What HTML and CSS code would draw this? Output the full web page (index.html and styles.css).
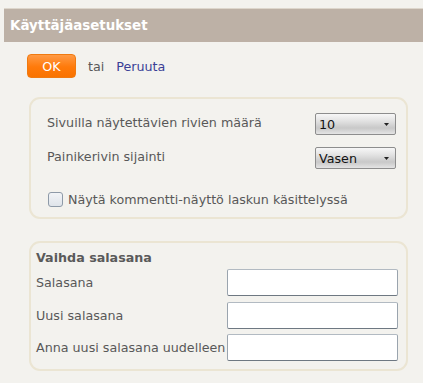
FILE: index.html
```html
<!DOCTYPE html>
<html lang="fi">
<head>
<meta charset="utf-8">
<link rel="stylesheet" href="styles.css">
</head>
<body>
<div class="page">
  <div class="header"><h1 class="title">Käyttäjäasetukset</h1></div>
  <div class="actions">
    <button class="ok-btn" type="button">OK</button>
    <span class="or">tai</span>
    <a class="cancel" href="#">Peruuta</a>
  </div>
  <div class="box box-prefs">
    <div class="row row-first">
      <span class="label">Sivuilla näytettävien rivien määrä</span>
      <div class="select"><span>10</span><svg class="arrow" width="5" height="3" viewBox="0 0 5 3"><path d="M0 0h5L2.5 3z" fill="#222"/></svg></div>
    </div>
    <div class="row row-second">
      <span class="label">Painikerivin sijainti</span>
      <div class="select"><span>Vasen</span><svg class="arrow" width="5" height="3" viewBox="0 0 5 3"><path d="M0 0h5L2.5 3z" fill="#222"/></svg></div>
    </div>
    <label class="check-row">
      <span class="checkbox"></span>
      <span class="label">Näytä kommentti-näyttö laskun käsittelyssä</span>
    </label>
  </div>
  <div class="box box-pass">
    <div class="box-title">Vaihda salasana</div>
    <div class="fields">
      <div class="field">
        <span class="label">Salasana</span>
        <span class="input"></span>
      </div>
      <div class="field">
        <span class="label">Uusi salasana</span>
        <span class="input"></span>
      </div>
      <div class="field">
        <span class="label">Anna uusi salasana uudelleen</span>
        <span class="input"></span>
      </div>
    </div>
  </div>
</div>
</body>
</html>
```
FILE: styles.css
```css
html, body {
  margin: 0;
  padding: 0;
  background: #f3f2ee;
}
body {
  font-family: "DejaVu Sans", Verdana, sans-serif;
  font-size: 12.7px;
  color: #585858;
}
.page {
  padding-top: 8px;
  width: 423px;
  height: 383px;
  box-sizing: border-box;
  overflow: hidden;
}
.header {
  margin-left: 4px;
  border-top: 1px solid #ddd6cc;
  background: #bdb1a6;
  height: 33px;
  display: flex;
  align-items: center;
  padding-left: 6px;
}
.title {
  margin: 0;
  font-size: 13.4px;
  font-weight: bold;
  color: #ffffff;
}
.actions {
  display: flex;
  align-items: center;
  margin: 12px 0 0 27px;
  height: 24px;
}
.ok-btn {
  width: 49px;
  height: 24px;
  border: 1px solid #f07a10;
  border-radius: 4px;
  background: linear-gradient(#ff9a45, #ff7a0a 55%, #f97300);
  color: #fff;
  font-family: "DejaVu Sans", Verdana, sans-serif;
  font-size: 12.7px;
  padding: 0;
}
.or {
  margin-left: 12px;
  color: #585858;
}
.cancel {
  margin-left: 12px;
  color: #3a3f96;
  text-decoration: none;
}
.box {
  margin-left: 29px;
  width: 379px;
  box-sizing: border-box;
  border: 2px solid #ebe5d3;
  border-radius: 11px;
}
.box-prefs {
  margin-top: 19px;
  height: 122px;
  padding: 14px 10px 0 16px;
}
.row {
  display: flex;
  justify-content: space-between;
  align-items: center;
  height: 22px;
}
.row .label {
  margin-bottom: 4px;
}
.row-second {
  margin-top: 12px;
}
.select {
  width: 81px;
  height: 22px;
  box-sizing: border-box;
  border: 1px solid #8d8d8d;
  border-radius: 2px;
  background: linear-gradient(#f7f7f7, #e2e2e2 35%, #c8c8c8 70%, #e4e4e4);
  display: flex;
  align-items: center;
  justify-content: space-between;
  padding: 0 6px 0 3px;
  color: #111;
}
.arrow {
  display: block;
}
.check-row {
  display: flex;
  align-items: center;
  margin-top: 23px;
}
.checkbox {
  width: 15px;
  height: 15px;
  box-sizing: border-box;
  border: 1px solid #8e9aa8;
  border-radius: 3px;
  background: linear-gradient(#f2f4f7, #dfe4ea);
  margin-right: 5px;
  margin-left: 1px;
}
.box-pass {
  margin-top: 22px;
  height: 130px;
  padding: 6px 8px 0 5px;
}
.box-title {
  font-weight: bold;
  color: #5a5a5a;
  height: 18px;
  line-height: 18px;
}
.fields {
  display: flex;
  flex-direction: column;
  gap: 6px;
  margin-top: 2px;
}
.field {
  display: flex;
  justify-content: space-between;
  align-items: center;
  height: 27px;
}
.field:last-child {
  margin-top: -1px;
}
.input {
  width: 171px;
  height: 27px;
  box-sizing: border-box;
  background: #fff;
  border: 1px solid #9aa4ae;
  border-bottom-color: #6e7882;
  border-top-color: #b2bac2;
  border-radius: 2px;
}
```
